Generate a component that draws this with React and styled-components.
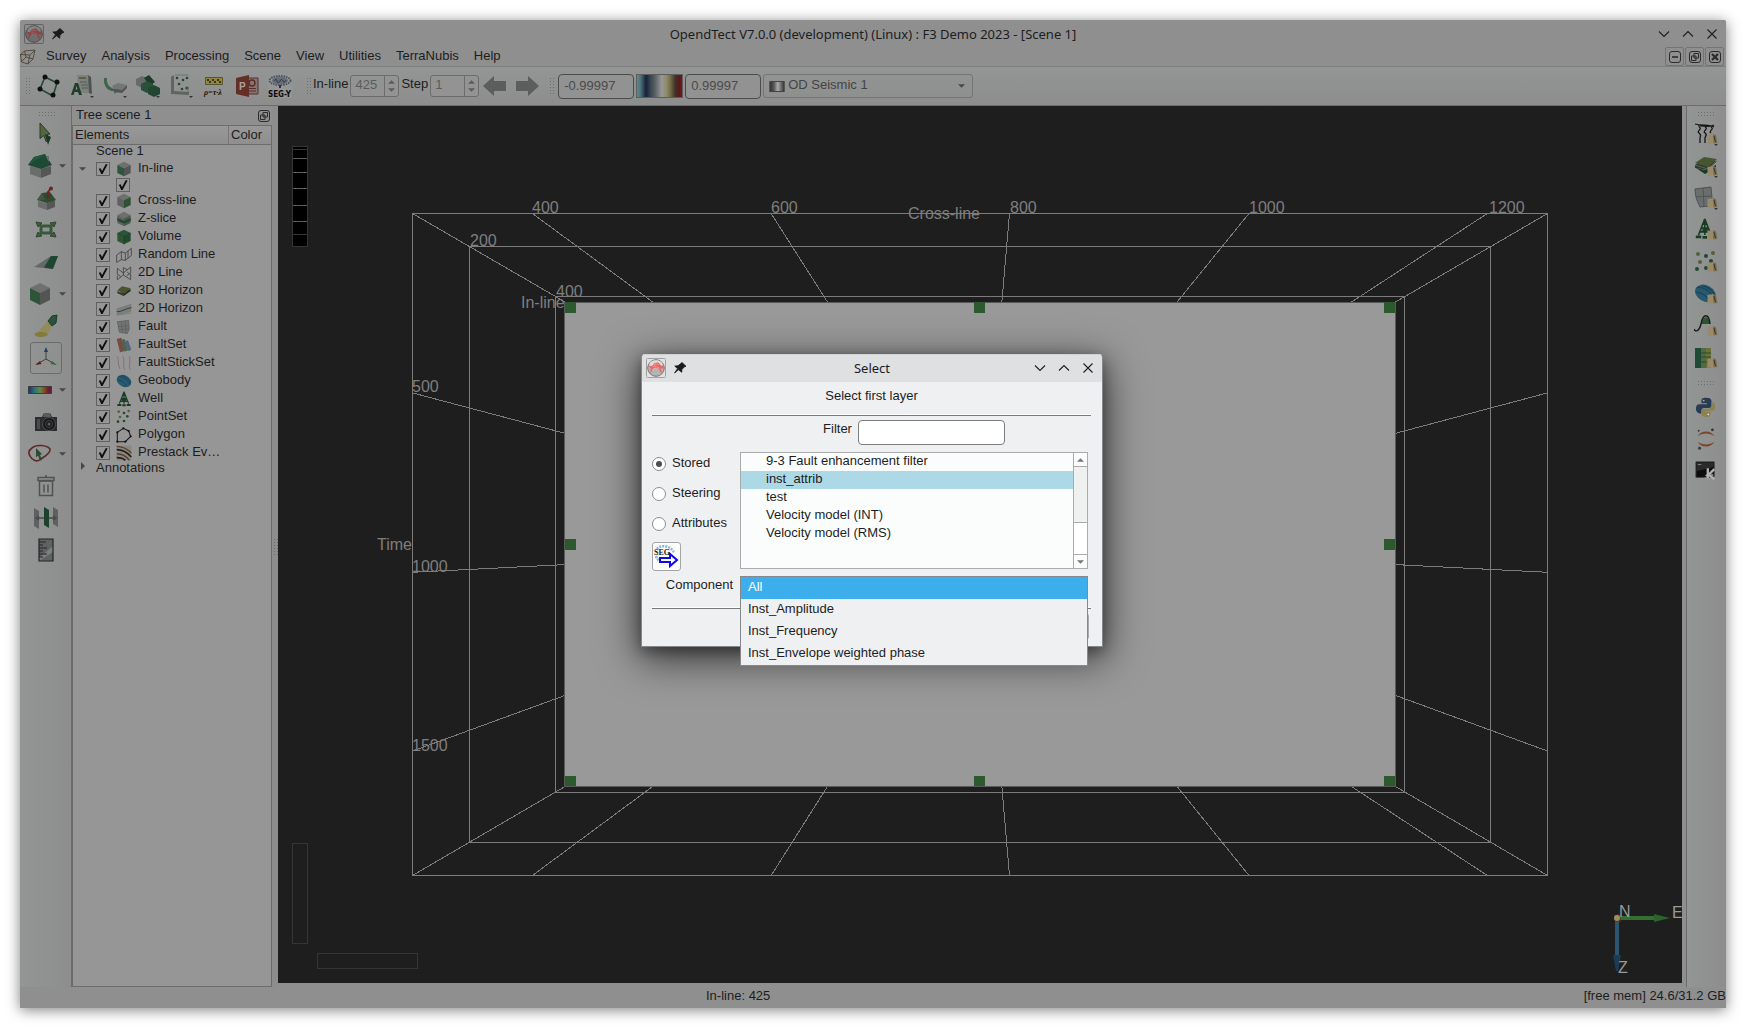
import React from "react";
import styled, { createGlobalStyle, css } from "styled-components";

const sans = `"Liberation Sans", Arial, Helvetica, sans-serif`;
const noto = `"Noto Sans", sans-serif`;

const Global = createGlobalStyle`
  *, *::before, *::after { box-sizing: border-box; }
  body { margin: 0; background: #fff; color: #1c1d1e; font: 13px/18px ${sans}; }
  button, input, select { font: inherit; color: inherit; margin: 0; }
  svg { display: block; flex: none; }
`;

/* ---------- window frame ---------- */

const Desktop = styled.div`
  display: flex;
  min-height: 100vh;
  padding: 20px;
`;

const MainWindow = styled.div`
  position: relative;
  display: flex;
  flex: 1;
  flex-direction: column;
  min-width: 0;
  background: #8f8f8f;
  border-radius: 2px 2px 0 0;
  box-shadow: 0 2px 14px rgba(0, 0, 0, 0.5);
`;

const TitleBar = styled.header`
  display: grid;
  grid-template-columns: 1fr auto 1fr;
  align-items: center;
  height: 27px;
  padding: ${(p) => (p.$dialog ? "0 4px 1px" : "0 4px")};
  font: 13px/18px ${noto};
  background: ${(p) => (p.$dialog ? "#dfe0e2" : "#8f8f8f")};
  border-radius: 3px 3px 0 0;
`;

const TitleText = styled.h1`
  margin: 0;
  font: inherit;
`;

const TitleSide = styled.div`
  display: flex;
  align-items: center;
  gap: ${(p) => (p.$end ? 4 : 6)}px;
  justify-content: ${(p) => (p.$end ? "flex-end" : "flex-start")};
`;

const PlainButton = styled.button`
  display: flex;
  align-items: center;
  justify-content: center;
  width: 20px;
  height: 20px;
  padding: 0;
  background: none;
  border: 0;
`;

const MenuBar = styled.nav`
  display: flex;
  align-items: center;
  height: 20px;
  border-bottom: 1px solid #7d7d7d;
`;

const MenuList = styled.div`
  display: flex;
  flex: 1;
  gap: 15px;
  padding-left: 10px;
`;

const MenuItem = styled.button`
  height: 18px;
  padding: 0 0 2px;
  line-height: 16px;
  background: none;
  border: 0;
`;

const MdiButtons = styled.div`
  display: flex;
  gap: 1px;
  padding-right: 2px;
`;

const MdiButton = styled(PlainButton)`
  width: 19px;
  height: 19px;
  border: 1px solid #747474;
  border-radius: 2px;
`;

/* ---------- top toolbar ---------- */

const Toolbar = styled.div`
  display: flex;
  align-items: center;
  height: 39px;
  padding-left: 5px;
  background: linear-gradient(#939695, #8d8d8d);
  border-bottom: 1px solid #6c6c6c;
`;

const Grip = styled.div`
  flex: none;
  width: ${(p) => (p.$wide ? 18 : 5)}px;
  height: ${(p) => (p.$wide ? 5 : 18)}px;
  background: radial-gradient(circle, #6c6d6d 0 0.8px, transparent 1px) 0 0 / 3px 3px;
`;

const ToolButton = styled.button`
  position: relative;
  display: flex;
  flex: none;
  align-items: center;
  justify-content: center;
  width: ${(p) => (p.$side ? 32 : 33)}px;
  height: 32px;
  padding: 0;
  background: none;
  border: 1px solid ${(p) => (p.$on ? "#6b6b6b" : "transparent")};
  border-radius: 3px;
`;

const ToolGroup = styled.div`
  display: flex;
  align-items: center;
  padding: 0 10px 0 2px;
`;

const Field = styled.label`
  display: flex;
  align-items: center;
  gap: 2px;
  padding-left: 2px;
`;

const FieldText = styled.span`
  padding-bottom: 4px;
`;

const Spin = styled.span`
  display: flex;
  width: 49px;
  height: 22px;
  color: #5b5b5b;
  background: #939393;
  border: 1px solid #6c6c6c;
  border-radius: 3px;
`;

const SpinInput = styled.input`
  width: 34px;
  padding: 0 0 2px 4px;
  background: none;
  border: 0;
  border-right: 1px solid #6c6c6c;
  outline: 0;
`;

const SpinArrows = styled.span`
  display: flex;
  flex: 1;
  flex-direction: column;
  align-items: center;
  justify-content: space-evenly;
`;

const RangeGroup = styled.div`
  display: flex;
  align-items: center;
  gap: 2px;
  padding-left: 4px;
`;

const ArrowGroup = styled.div`
  display: flex;
  padding-right: 6px;
`;

const RangeInput = styled.input`
  width: 76px;
  height: 25px;
  padding: 0 4px 2px 5px;
  color: #4a4a4a;
  background: #929292;
  border: 1px solid #4c4c4c;
  border-radius: 4px;
`;

const ColorBar = styled.div`
  width: 47px;
  height: 24px;
  border: 1px solid #5d5d5d;
  background: linear-gradient(90deg, #5e8a8c, #4b7278 8%, #16213a 20%, #3a4552 30%, #596063 40%, #989898 55%, #8d8a66 66%, #6e6846 75%, #3c3328 85%, #60161a 94%, #6e1a1a);
`;

const TableSelect = styled.span`
  display: flex;
  align-items: center;
  width: 210px;
  height: 24px;
  padding: 0 7px 0 5px;
  border: 1px solid #757575;
  border-radius: 3px;
`;

const BareSelect = styled.select`
  flex: 1;
  height: 20px;
  padding: 0 0 2px 3px;
  color: #444;
  appearance: none;
  background: none;
  border: 0;
`;

/* ---------- workspace ---------- */

const Workspace = styled.div`
  display: flex;
  flex: 1;
  min-height: 0;
`;

const SideBar = styled.aside`
  display: flex;
  flex: none;
  flex-direction: column;
  align-items: ${(p) => (p.$right ? "center" : "flex-start")};
  width: ${(p) => (p.$right ? 40 : 51)}px;
  padding: 5px ${(p) => (p.$right ? 2 : 0)}px 0 0;
  background: linear-gradient(90deg, #939695, #8d8d8d);
  border-left: ${(p) => (p.$right ? "1px solid #6c6c6c" : "0")};
`;

const GripRow = styled.div`
  display: flex;
  align-self: ${(p) => (p.$left ? "flex-start" : "center")};
  align-items: ${(p) => (p.$gap ? "center" : "flex-start")};
  height: ${(p) => (p.$gap ? 17 : 7)}px;
  margin-left: ${(p) => (p.$left ? 18 : 0)}px;
`;

const SideRow = styled.div`
  display: flex;
  align-items: center;
  padding-left: ${(p) => (p.$drop ? 4 : 10)}px;
`;

const DropButton = styled.button`
  display: flex;
  align-items: center;
  justify-content: center;
  width: 12px;
  height: 20px;
  padding: 0;
  background: none;
  border: 0;
`;

const TreeDock = styled.section`
  display: flex;
  flex: none;
  flex-direction: column;
  width: 201px;
  border-left: 1px solid #6c6c6c;
`;

const DockTitle = styled.h2`
  display: flex;
  justify-content: space-between;
  height: 19px;
  margin: 0;
  padding-left: 4px;
  font: 13px/18px ${sans};
`;

const FloatButton = styled(PlainButton)`
  width: 16px;
`;

const TreeBox = styled.div`
  flex: 1;
  background: #969696;
  border: 1px solid #6c6c6c;
`;

const TreeHead = styled.div`
  display: flex;
  height: 19px;
  background: linear-gradient(#989898, #8f8f8f);
  border-bottom: 1px solid #6c6c6c;
`;

const HeadCell = styled.div`
  flex: ${(p) => (p.$grow ? 1 : "none")};
  width: ${(p) => (p.$grow ? "auto" : "43px")};
  padding-left: 2px;
  border-left: ${(p) => (p.$grow ? "0" : "1px solid #777")};
`;

const TreeRow = styled.div`
  display: flex;
  align-items: center;
  height: ${(p) => p.$h}px;
  padding-left: ${(p) => (p.$sub ? 43 : 4)}px;
  line-height: ${(p) => (p.$h < 16 ? 12 : 16)}px;
`;

const PlainRow = styled(TreeRow)`
  align-items: flex-start;
`;

const Expander = styled.span`
  display: flex;
  justify-content: center;
  width: 11px;
  margin-right: 8px;
`;

const TreeLabel = styled.label`
  display: flex;
  align-items: center;
  gap: 6px;
`;

const TreeText = styled.span`
  padding-bottom: 2px;
`;

const Check = styled.input`
  display: grid;
  place-items: center;
  width: 14px;
  height: 14px;
  appearance: none;
  border: 1px solid #616161;

  &:checked::before {
    content: "";
    width: 10px;
    height: 10px;
    background: #101010;
    clip-path: polygon(8% 48%, 26% 42%, 40% 70%, 78% 0, 96% 6%, 46% 100%, 32% 100%);
  }
`;

const Splitter = styled.div`
  display: flex;
  flex: none;
  align-items: center;
  justify-content: center;
  width: 6px;
  background: #8d8d8d;
`;

const SceneArea = styled.main`
  flex: 1;
  min-width: 0;
  margin: 0 4px 4px 0;
  overflow: hidden;
  background: #1e1e1e;
`;

const SceneSvg = styled.svg`
  width: 100%;
  height: 100%;
  font: 16px ${sans};
  fill: #7e7e7e;
`;

const StatusBar = styled.footer`
  display: grid;
  grid-template-columns: 1fr auto;
  height: 21px;
  padding-left: 686px;
  line-height: 18px;
`;

/* ---------- dialog ---------- */

const Overlay = styled.div`
  position: absolute;
  inset: 0;
  display: flex;
  align-items: flex-start;
  justify-content: center;
  padding: 334px 2px 0 0;
`;

const Dialog = styled.div`
  width: 462px;
  background: #eff0f2;
  border: 1px solid #85878a;
  border-top-color: #d0d1d3;
  border-radius: 4px 4px 0 0;
  box-shadow: 0 10px 40px 2px rgba(0, 0, 0, 0.65), 0 4px 14px rgba(0, 0, 0, 0.35);
`;

const DialogBody = styled.div`
  padding: 0 11px 0 10px;
`;

const DialogHeading = styled.h2`
  margin: 0;
  padding: 5px 0 9px;
  font: 13px/18px ${sans};
  text-align: center;
`;

const Rule = styled.hr`
  height: 2px;
  margin: 0;
  background: #77797b;
  border: 0;
  border-top: 1px solid #fff;
`;

const FormGrid = styled.div`
  display: grid;
  grid-template-columns: 88px 1fr;
  padding-right: 3px;
`;

const FilterRow = styled.label`
  display: flex;
  grid-column: 2;
  gap: 6px;
  justify-content: center;
  height: 33px;
  padding-top: 4px;
`;

const FilterInput = styled.input`
  width: 147px;
  height: 25px;
  padding: 0 5px;
  background: #fff;
  border: 1px solid #7b7d7f;
  border-radius: 4px;
`;

const RadioGroup = styled.div`
  display: flex;
  flex-direction: column;
  align-items: flex-start;
`;

const RadioRow = styled.label`
  display: flex;
  align-items: center;
  gap: 6px;
  height: 30px;
`;

const RadioText = styled.span`
  padding-bottom: 2px;
`;

const Radio = styled.input`
  display: grid;
  place-items: center;
  width: 14px;
  height: 14px;
  appearance: none;
  background: #fff;
  border: 1px solid #8b8d8f;
  border-radius: 50%;

  &:checked::before {
    content: "";
    width: 6px;
    height: 6px;
    background: #4d4d4d;
    border-radius: 50%;
  }
`;

const SegButton = styled(PlainButton)`
  width: 29px;
  height: 29px;
  margin-top: 3px;
  background: #fcfcfc;
  border: 1px solid #a3a5a7;
  border-radius: 3px;
`;

const ListFrame = styled.div`
  display: flex;
  height: 117px;
  margin-top: 3px;
  background: #fbfdfd;
  border: 1px solid #a9abad;
`;

const listBase = css`
  display: block;
  padding: 0;
  overflow: hidden;
  border: 0;
  border-radius: 0;
  outline: 0;
  scrollbar-width: none;
`;

const StoredList = styled.select`
  ${listBase}
  flex: 1;
  background: transparent;

  option {
    height: 18px;
    min-height: 18px;
    padding: 0 0 0 25px;
    font: 13px/16px ${sans};
    color: #1c1d1e;
  }

  option:checked {
    color: #1c1d1e;
    background: #add8e6 linear-gradient(#add8e6, #add8e6);
  }
`;

const ScrollTrack = styled.div`
  display: flex;
  flex-direction: column;
  width: 14px;
  background: #fff;
  border-left: 1px solid #a9abad;
`;

const ScrollButton = styled.button`
  display: flex;
  align-items: center;
  justify-content: center;
  height: 14px;
  padding: 0;
  background: #fcfcfc;
  border: 0 solid #a9abad;
  border-width: ${(p) => (p.$down ? "1px 0 0" : "0 0 1px")};
`;

const ScrollThumb = styled.div`
  height: 56px;
  margin-bottom: auto;
  background: #eff0f0;
  border-bottom: 1px solid #a9abad;
`;

const ComponentRow = styled.div`
  position: relative;
  display: flex;
  grid-column: 1 / -1;
  height: 36px;
  padding-top: 5px;
`;

const ComponentLabel = styled.label`
  width: 81px;
  text-align: right;
`;

const ComponentPopup = styled.select`
  ${listBase}
  position: absolute;
  top: 5px;
  left: 88px;
  z-index: 2;
  width: 348px;
  height: 90px;
  background: #eff0f2;
  border: 1px solid #85898d;

  option {
    height: 22px;
    min-height: 22px;
    padding: 2px 0 0 7px;
    font: 13px/20px ${sans};
    color: #1c1d1e;
  }

  option:checked {
    color: #fff;
    background: #3daeec linear-gradient(#3daeec, #3daeec);
  }
`;

const DialogFooter = styled.div`
  display: flex;
  justify-content: flex-end;
  height: 37px;
  padding: 4px 2px 0 0;
`;

const FooterButton = styled.button`
  width: 84px;
  height: 27px;
  background: #f6f7f8;
  border: 1px solid #a9abad;
  border-radius: 3px;
`;

/* ---------- drawings ---------- */

const Ico = ({ s = 24, children, box = 24 }) => (
  <svg width={s} height={s} viewBox={`0 0 ${box} ${box}`} fill="none" aria-hidden="true">
    {children}
  </svg>
);

const Down = ({ c = "#474747" }) => (
  <svg width="7" height="4" viewBox="0 0 8 4" aria-hidden="true"><path d="M0 0h8L4 4z" fill={c} /></svg>
);
const Up = ({ c = "#474747" }) => (
  <svg width="7" height="4" viewBox="0 0 8 4" aria-hidden="true"><path d="M0 4h8L4 0z" fill={c} /></svg>
);
const RightTri = () => (
  <svg width="4" height="8" viewBox="0 0 4 8" aria-hidden="true"><path d="M0 0v8l4-4z" fill="#474747" /></svg>
);

const AppIcon = ({ dim }) => (
  <Ico s={20} box={20}>
    <rect x=".5" y=".5" width="19" height="19" rx="1" fill={dim ? "#8b8b8b" : "#e2e2e2"} stroke={dim ? "#646464" : "#a2a2a2"} />
    <circle cx="10" cy="10" r="8.3" fill={dim ? "#6e6e6e" : "#b3b5b4"} stroke={dim ? "#4c4c4c" : "#777"} />
    <ellipse cx="10" cy="6.500" rx="6.500" ry="4.200" fill={dim ? "#848484" : "#dcdddd"} />
    <path d="M2.500 8.500 7 7.500l1-2.500 4.500-.5 2 2.500 3.500 2-1 2-2.500-1 1.500 4.500h-1.500L13 10.500l-5-.3-2 1-.5 3.300H4.200l.5-4.500z" fill={dim ? "#8f4444" : "#ef6562"} />
    <path d="M8 6l5 .5M7 8.500l6 1M9 5v4" stroke={dim ? "#a06a6a" : "#f7a5a2"} strokeWidth=".6" />
  </Ico>
);

const Pin = () => (
  <Ico s={16} box={16}>
    <path d="M10 2.500 14 6.300l-1.500.5-2.500 2.500-.3 3L6.500 9.800 2.500 13l3-4.300L2.800 6l3.200-.2 2.800-2.300z" fill="#1a1b1c" stroke="#1a1b1c" strokeWidth=".8" strokeLinejoin="round" />
  </Ico>
);

const Chev = ({ kind }) => (
  <Ico s={12} box={12}>
    <path d={kind === "min" ? "M1 3.500l5 5 5-5" : kind === "max" ? "M1 8.500l5-5 5 5" : "M1.500 1.500l9 9M10.500 1.500l-9 9"} stroke="#1d1e20" strokeWidth="1.100" />
  </Ico>
);

const WindowControls = () => (
  <TitleSide $end>
    <PlainButton aria-label="Minimize"><Chev kind="min" /></PlainButton>
    <PlainButton aria-label="Maximize"><Chev kind="max" /></PlainButton>
    <PlainButton aria-label="Close"><Chev kind="close" /></PlainButton>
  </TitleSide>
);

const MdiGlyph = ({ kind }) => (
  <Ico s={12} box={12}>
    <rect x=".5" y=".5" width="11" height="11" rx="2.500" stroke="#2b2b2b" />
    {kind === "min" && <path d="M3 6h6" stroke="#2b2b2b" strokeWidth="1.600" />}
    {kind === "restore" && <path d="M5 2.500h4.500V7H5zM2.500 5h4.500v4.500H2.500z" stroke="#2b2b2b" />}
    {kind === "close" && <path d="M3 3l6 6M9 3L3 9" stroke="#2b2b2b" strokeWidth="2.200" />}
  </Ico>
);

const WireBox = () => (
  <Ico s={16} box={16}>
    <path d="M.5 5.500 4.500 2 15 1l-2 9-5 5-6.500-2zM.5 5.500 10 6l5-5M10 6 8 15M2 12l4-4 7 2M4.500 2 6 8" stroke="#4f4437" strokeWidth=".9" />
  </Ico>
);

const Folder = () => (
  <g>
    <path d="M13.500 13l6-1v9l-6 1z" fill="#978b6c" />
    <path d="M19 12l3 1 1.500 8-4 .5z" fill="#7a6e50" />
    <path d="M20 14l1.500 6" stroke="#3a3427" />
  </g>
);
const Corner = () => <path d="M20 22h4l-2 2z" fill="#333" />;

const Cube = ({ top = "#6e7070", left = "#5f6161", right = "#535555" }) => (
  <g>
    <path d="M12 1 22 6 12 11 2 6z" fill={top} />
    <path d="M2 6l10 5v12L2 18z" fill={left} />
    <path d="M22 6l-10 5v12l10-5z" fill={right} />
  </g>
);

const Tower = () => (
  <g stroke="#183c24" strokeWidth="1.700">
    <path d="M12 1 5 19M12 1l7 18M8 11h8M9.500 7h5M7 15.500h10M8 11l9 5M16 11l-9 5M12 1v18" />
    <path d="M2 21h6M9.500 21.500h5M16 21h6" strokeWidth="3" />
  </g>
);
const Dots = () => (
  <g>
    {[[4, 4], [19, 3], [6, 12]].map(([x, y]) => <circle key={x} cx={x} cy={y} r="2" fill="#56603c" />)}
    {[[12, 6], [17, 11], [3, 19], [12, 18]].map(([x, y]) => <circle key={x + y} cx={x} cy={y} r="2" fill="#1f4a31" />)}
  </g>
);
const Body = () => (
  <g>
    <ellipse cx="12" cy="12" rx="11.500" ry="8.500" transform="rotate(28 12 12)" fill="#275a70" />
    <path d="M3 6c6-2 15 4 18 11M2 11c5-1 11 3 14 9M8 4c6 0 12 5 14 10" stroke="#1a4558" strokeWidth="1.400" />
  </g>
);
const FaultPatch = () => (
  <g>
    <path d="M2 4l17-2 1 13-3 7-12-2z" fill="#727474" stroke="#5c5d5d" />
    <path d="M8 3.500l2 17M14 3l1 18M3 11l16-1M5 16l14-1" stroke="#5a5c5c" />
  </g>
);
const Slab = () => (
  <g>
    <path d="M2 14l9 6 11-6v-3L11 16z" fill="#173d2a" />
    <path d="M1 11 10 5l13 2-9 9-13-2z" fill="#2e3b2c" />
    <path d="M1 9 10 3l13 2-9 8z" fill="#465730" />
    <path d="M1 11l13 4 9-9" stroke="#7c7c7a" strokeWidth=".6" />
  </g>
);
const HorizonPatch = () => (
  <g>
    <path d="M2 15l10 4 10-7v-3L12 14z" fill="#1f2a20" />
    <path d="M2 12v3l10 5v-4z" fill="#33402a" />
    <path d="M2 11 9 5l13 3-9 8z" fill="#4a5230" />
  </g>
);

const treeArt = {
  inline: <Cube left="#2f5539" />,
  cross: <Cube right="#2c5234" />,
  zslice: <g><Cube /><path d="M2 10.500l10 4.500 10-4.500v4L12 19 2 14.500z" fill="#22492f" /></g>,
  volume: <g><Cube top="#2c5536" left="#2b5636" right="#24492e" /><path d="M2 6l10 5 10-5M12 11v12" stroke="#1b3a25" /></g>,
  random: <path d="M1 12 8 7v12l-7 4zM8 7l6 2v11l-6-1M14 9l9-7v11l-9 7M18 6v11" stroke="#3b3c3d" strokeWidth="1.200" />,
  line2d: <path d="M2 5l9 7 11-9v9l-6 4M2 5v9l5 3M2 22l9-7 11 7v-8l-5-3M2 22v-6M11 4v11M11 4l6 3" stroke="#3b3c3d" strokeWidth="1.200" />,
  hor3d: <HorizonPatch />,
  hor2d: <g><path d="M1 11 23 4v12L1 21z" fill="#7b7e7c" /><path d="M1 16c9 0 11-4 22-6" stroke="#25412f" strokeWidth="1.400" /><path d="M1 21l22-3" stroke="#6b6d6c" /></g>,
  fault: <FaultPatch />,
  faultset: <g><path d="M1 3l7-2 5 20-7 2z" fill="#754b42" /><path d="M8 4l5-1 5 17-5 2z" fill="#4a6650" /><path d="M14 6l4-1 5 14-5 2z" fill="#50657c" /></g>,
  sticks: <path d="M2 2c3 6 0 12 4 19M10 2c4 6-1 12 3 20M20 2c3 6-2 12 1 20" stroke="#83676a" strokeWidth="1.200" />,
  body: <Body />,
  well: <Tower />,
  points: <Dots />,
  polygon: <g><path d="M2 8 11 2l8 4 3 8-8 8H2z" stroke="#181818" strokeWidth="1.600" />{[[2, 8], [11, 2], [19, 6], [22, 14], [14, 22], [2, 22]].map(([x, y]) => <circle key={x + y} cx={x} cy={y} r="1.600" fill="#111" />)}</g>,
  prestack: <g><path d="M1 1h22v22H1z" fill="#898782" /><path d="M1 7c8 0 16 4 22 11M1 19c6 0 10 1 13 4" stroke="#20201e" strokeWidth="2.400" /><path d="M1 2c9 0 16 4 22 10" stroke="#5a3f20" strokeWidth="2" /><path d="M1 13c8 0 14 3 19 10" stroke="#5a3f20" strokeWidth="2.200" /></g>,
};

const House = () => (
  <g>
    <path d="M2 12l11 3v9L2 20z" fill="#6b6c6c" />
    <path d="M13 15l10-3v8l-10 4z" fill="#555656" />
    <path d="M0 11 6 3l11-3 7 11-11 4z" fill="#1c4a35" />
    <path d="M0 11 6 3l11-3-5 4z" fill="#225640" />
    <path d="M18 2h3v6l-2-3z" fill="#6a6b6b" />
  </g>
);

const WellHouse = () => (
  <g>
    <path d="M4 15l9 2v7l-9-3z" fill="#6b6c6c" />
    <path d="M13 17l8-3v7l-8 3z" fill="#555656" />
    <path d="M3 14 8 7l8-1 6 8-9 3z" fill="#314a33" />
    <path d="M3 14 8 7l3 7z" fill="#3d5a40" />
    <path d="M14 11V6l3-4" stroke="#6e2420" strokeWidth="2" />
    <circle cx="17" cy="2.500" r="2" fill="#6e2420" />
    <path d="M11 9l3 4 3-4z" fill="#5e2a22" />
  </g>
);

const leftTools = [
  { name: "Select", art: <g><path d="M6 1l10 11-3 .5 2 6-3 1-2-6-4 3z" fill="#53663f" stroke="#2b3a26" /><path d="M11 12l6 3-3 8z" fill="#17392a" /></g> },
  { name: "Survey box", drop: true, art: <House /> },
  { name: "Wells", art: <WellHouse /> },
  { name: "View all", art: <g><path d="M7 8h10v7H7z" stroke="#36583b" strokeWidth="3" /><path d="M2 4l6 1-4 4zM22 4l-6 1 4 4zM2 19l6-1-4-4zM22 19l-6-1 4-4z" fill="#465a3c" stroke="#2f4731" /></g> },
  { name: "View plane", art: <g><path d="M0 17 17 6h7l-6 13z" fill="#656868" /><path d="M17 6h7l-5 13-9-1.500z" fill="#1f4630" /></g> },
  { name: "View inline", drop: true, art: <Cube left="#2f5539" /> },
  { name: "Headlight", art: <g><path d="M14 7l4 5-5 10-12-1z" fill="#928b58" /><ellipse cx="7" cy="20.500" rx="6.500" ry="2.500" fill="#857b38" /><path d="M14 7l4-5 5-1-1 8-4 3z" fill="#2b523b" stroke="#1c3c29" /></g> },
  { name: "Axes", on: true, art: <g><path d="M12 13V3M12 13l-9 5M12 13l9 5" stroke="#404040" /><path d="M12 1l2 5h-4z" fill="#223d63" /><path d="M1 19l5-4 1.500 3z" fill="#5b2020" /><path d="M23 19l-5-4-1.500 3z" fill="#336a3c" /></g> },
  { name: "Color table", drop: true, art: <g><defs><linearGradient id="rb"><stop offset="0" stopColor="#24286e" /><stop offset=".25" stopColor="#27707a" /><stop offset=".5" stopColor="#5f8a45" /><stop offset=".7" stopColor="#82482a" /><stop offset=".85" stopColor="#702020" /><stop offset="1" stopColor="#551c55" /></linearGradient></defs><path d="M.5 8.500h23v7H.5z" fill="url(#rb)" stroke="#3d3d3d" /></g> },
  { name: "Snapshot", art: <g><path d="M1 7h7l2-4h6l2 4h5v14H1z" fill="#2c2d2e" /><path d="M10 3h6l1 4H9z" fill="#5a5c5c" /><path d="M3 9h3v10H3z" fill="#4a4c4d" /><circle cx="15" cy="14" r="6.500" fill="#1a1a1a" stroke="#4e4f50" /><circle cx="15" cy="14" r="3.500" stroke="#3f4244" /><circle cx="15" cy="14" r="1.500" fill="#5a5f62" /></g> },
  { name: "Polygon select", drop: true, art: <g><path d="M4 6c4-4 15-3 18 1 1 4-5 7-9 10-4 4-9 1-11-3-2-3-1-6 2-8z" stroke="#5f292b" strokeWidth="1.600" /><path d="M8 6l6 6-2 1 2 5-2 .5-2-5-2 2z" fill="#2c4a30" /></g> },
  { name: "Delete", art: <g stroke="#505151" strokeWidth="1.500"><path d="M5.500 7h13v14.500h-13zM10 10.500v8M14 10.500v8M12 1v2" /><path d="M4 3.500h16v3H4z" /></g> },
  { name: "Display sections", art: <g><path d="M0 2l5 3v18l-5-3zM19 1l5 3v17l-5-3z" fill="#5f6161" /><path d="M2 12h20M19 10l3 2-3 2M5 10l-3 2 3 2" stroke="#47494a" strokeWidth="1.400" /><path d="M10 1l5 3v18l-5-3z" fill="#1d422b" /></g> },
  { name: "Measure", art: <g><path d="M5 1h14v22H5z" fill="#5f6262" /><path d="M5 20 19 8v6L5 23z" fill="#7d8080" /><path d="M5 1h14v22H5z" stroke="#242526" strokeWidth="1.200" /><path d="M5 4h7M5 7h4M5 10h8M5 13h4M5 16h8M5 19h4" stroke="#242526" strokeWidth="1.200" /></g> },
];

const topTools = [
  { name: "Survey setup", art: <g><path d="M8 3l12 6-4 13L3 15z" stroke="#234a34" strokeWidth="1.600" />{[[8, 3], [20, 8], [16, 21], [3, 15]].map(([x, y]) => <circle key={x} cx={x} cy={y} r="2.500" fill="#101010" />)}</g> },
  { name: "Attributes", art: <g><path d="M7 1h11l3 18H9z" fill="#7d807e" /><path d="M18 1l3 2 1 17-3-1z" fill="#4f5150" /><path d="M9 3h7v2H9z" fill="#59613f" /><path d="M10 8h7M11 11h7M12 14h6" stroke="#53604f" /><path d="M1 21 5 9h3l4 12H9l-1-3H4.500l-1 3zM5.500 15.500h2L6.500 12z" fill="#1e3f29" fillRule="evenodd" /><Corner /></g> },
  { name: "Volume builder", art: <g><path d="M1 4c-1 9 5 14 11 13l-1 3 6-4-5-3v2C7 14 3 10 4 4z" fill="#3f6449" /><path d="M9 12l6-3 9 2-5 5-8-1z" fill="#737674" /><path d="M11 15l8 1 5-5v3l-5 5-8-1z" fill="#515453" /><Corner /></g> },
  { name: "Volume set", art: <g><path d="M0 5l6-3 5 2v7l-5 3-6-3z" fill="#686a6a" /><path d="M8 4l5-3 6 7-5 4z" fill="#1b3c28" /><path d="M5 10l6-3 6 3v6l-6 3-6-3z" fill="#2a5039" /><path d="M12 14l6-3 6 3v6l-6 3-6-3z" fill="#224632" /><Corner /></g> },
  { name: "Cross-plot", art: <g><path d="M2 3l3-2v16l15 1v3L2 20z" fill="#626464" /><g fill="#25472f"><circle cx="8" cy="4" r="1.300" /><circle cx="14" cy="6" r="1.300" /><circle cx="18" cy="4" r="1.300" /><circle cx="10" cy="10" r="1.300" /><circle cx="18" cy="14" r="1.600" /><circle cx="13" cy="15" r="1.300" /></g><path d="M6 1h13M19 18v-5" stroke="#717272" /><Corner /></g> },
  { name: "Rock physics", art: <g><path d="M3.500 3.500h17v7h-17z" fill="#8f8640" stroke="#59542c" /><path d="M5 6h2M10 6h2M15 6h2M7 8h2M12 8h2M17 8h2" stroke="#1e1d12" strokeWidth="1.400" /><text x="2" y="21" fontFamily="Liberation Serif, serif" fontStyle="italic" fontWeight="bold" fontSize="8" fill="#161616">ρ=τ·λ</text></g> },
  { name: "PowerPoint", art: <g><path d="M13 4h10v16H13z" fill="#857572" stroke="#5b2d27" /><circle cx="17" cy="9" r="3" stroke="#5b2d27" strokeWidth="1.500" /><path d="M14 14.500h7M14 17h7" stroke="#5b2d27" /><path d="M1 4l13-3v22L1 20z" fill="#642f28" /><text x="4" y="16" fontFamily="Liberation Sans, sans-serif" fontWeight="bold" fontSize="10" fill="#a9a2a1">P</text></g> },
];

const SegY = () => (
  <Ico>
    <path d="M0 0h24v24H0z" fill="#959595" />
    <ellipse cx="12" cy="6.500" rx="10.500" ry="4.500" stroke="#4a505c" strokeWidth="2" strokeDasharray="1.500 1" />
    <ellipse cx="12" cy="6.500" rx="8" ry="4" fill="#666c78" />
    <path d="M6 7c1-2 3-2 3 0s2 2 3 0 2-2 3 0 2 1 3-1" stroke="#2c3341" />
    <path d="M12 11v3" stroke="#2c3341" strokeWidth="2" />
    <text x="0" y="23" fontFamily="DejaVu Sans Condensed, DejaVu Sans, sans-serif" fontWeight="bold" fontSize="8" fill="#0c0c0c">SEG-Y</text>
  </Ico>
);

const rightTools = [
  { name: "Seismics", art: <g><path d="M1 2c7 2 15 0 19 3M4 4c6-1 10 2 16-1" stroke="#151515" strokeWidth="1.200" /><path d="M5 5c4 2-3 4 0 6s1 3 1 5v5M11 5c4 2-3 4 0 6s0 3 0 5v5M17 5c4 2-3 4 0 6" stroke="#151515" strokeWidth="1.300" /><Folder /><Corner /></g> },
  { name: "Horizons", art: <g><Slab /><Folder /><Corner /></g> },
  { name: "Faults", art: <g><path d="M1 3l16-2 1 11-3 8-9 1C3 15 1 10 1 3z" fill="#6a6e6e" stroke="#4f5252" /><path d="M9 2l1 18M2 11l15-1" stroke="#505353" /><Folder /><Corner /></g> },
  { name: "Wells manager", art: <g><g transform="scale(.9)"><Tower /></g><Folder /></g> },
  { name: "PointSets", art: <g><Dots /><Folder /></g> },
  { name: "Bodies", art: <g><g transform="scale(.95)"><Body /></g><Folder /></g> },
  { name: "Wavelets", art: <g><path d="M7 10c2-9 8-9 9 0z" fill="#2c5630" /><path d="M0 15c1 3 5 3 7-5 2-11 8-11 9 0" stroke="#191919" strokeWidth="1.400" /><Folder /></g> },
  { name: "Stratigraphy", art: <g><path d="M1 2h6v20H1z" fill="#1f4a35" /><path d="M7 2h10v20H7z" fill="#516a40" /><path d="M12 2h5v20h-5z" fill="#6d7038" /><path d="M7 7h10M7 11h10M7 16h6" stroke="#31492c" /><Folder /></g> },
];

const devTools = [
  { name: "Python", art: <g><path d="M12 2c-4 0-5 1-5 4v2h6v1H5c-3 0-4 2-4 5s2 5 4 5h2v-3c0-2 1-3 3-3h5c2 0 3-1 3-3V6c0-3-2-4-6-4z" fill="#2a3c54" /><path d="M12 23c4 0 5-1 5-4v-2h-6v-1h8c3 0 3-2 3-5s-1-4-3-4h-1v3c0 2-1 4-3 4h-4c-3 0-4 1-4 3v3c0 2 2 3 5 3z" fill="#8c8153" /><circle cx="9.500" cy="5" r="1" fill="#aaa" /><circle cx="14.500" cy="20" r="1" fill="#ddd" /></g> },
  { name: "Jupyter", art: <g><path d="M3 9c3-7 15-7 18 0-5-4-13-4-18 0zM3 15c3 7 15 7 18 0-5 4-13 4-18 0z" fill="#7b4428" /><circle cx="19" cy="2" r="1.500" fill="#333" /><circle cx="4" cy="3" r="1" fill="#333" /><circle cx="5" cy="22" r="1.800" fill="#444" /></g> },
  { name: "Terminal", art: <g><path d="M1 2h20v17H1z" fill="#0b0b0b" stroke="#444" /><path d="M2 3h18v5L2 12z" fill="#2a2a2a" /><path d="M3 5h4" stroke="#888" /><circle cx="16" cy="20" r="4.500" stroke="#8f8f8f" strokeWidth="2.500" strokeDasharray="2 1.200" /><path d="M14 9v11M21 10l-6 6 6 5" stroke="#b0b0b0" strokeWidth="2.600" /></g> },
];

/* ---------- scene ---------- */

const outer = { x1: 412.5, y1: 213.5, x2: 1547.5, y2: 875.5 };
const face = { x1: 565, y1: 302, x2: 1395.5, y2: 786.5 };
const rings = [outer, { x1: 469.5, y1: 246.5, x2: 1490.5, y2: 842.5 }, { x1: 555.5, y1: 296.5, x2: 1404.5, y2: 792.5 }];
const along = (r, axis, t) => r[axis + 1] + (r[axis + 2] - r[axis + 1]) * t;
const colTicks = [0, 0.1056, 0.316, 0.526, 0.737, 0.947, 1];
const rowTicks = [0.271, 0.542, 0.812];
const sceneLabels = [
  [532, 213, "400"], [771, 213, "600"], [1010, 213, "800"], [1249, 213, "1000"], [1489, 213, "1200"],
  [908, 219, "Cross-line"], [470, 246, "200"], [556, 297, "400"], [521, 308, "In-line"],
  [412, 392, "500"], [377, 550, "Time"], [412, 572, "1000"], [412, 751, "1500"],
];
const handles = [[565, 302], [974, 302], [1384, 302], [565, 539], [1384, 539], [565, 776], [974, 776], [1384, 776]];

const Scene = () => (
  <SceneSvg viewBox="278 106 1404 877" role="img" aria-label="Scene 1">
    <g fill="none" stroke="#7c7c7c" shapeRendering="crispEdges">
      {rings.map((r) => <rect key={r.x1} x={r.x1} y={r.y1} width={r.x2 - r.x1} height={r.y2 - r.y1} />)}
      {colTicks.map((t) => (
        <path key={t} d={`M${along(outer, "x", t)} ${outer.y1}L${along(face, "x", t)} ${face.y1}M${along(outer, "x", t)} ${outer.y2}L${along(face, "x", t)} ${face.y2}`} />
      ))}
      {rowTicks.map((t) => (
        <path key={t} d={`M${outer.x1} ${along(outer, "y", t)}L${face.x1} ${along(face, "y", t)}M${outer.x2} ${along(outer, "y", t)}L${face.x2} ${along(face, "y", t)}`} />
      ))}
    </g>
    {sceneLabels.map(([x, y, s]) => <text key={x + "-" + y} x={x} y={y}>{s}</text>)}
    <rect x="564.500" y="302.500" width="831" height="484" fill="#999" stroke="#5a5a5a" shapeRendering="crispEdges" />
    {handles.map(([x, y]) => <rect key={x + "-" + y} x={x} y={y} width="11" height={y === 776 ? 10 : 11} fill="#2d592f" />)}
    <g fill="none" stroke="#353535" shapeRendering="crispEdges">
      <rect x="292.500" y="146.500" width="15" height="100" fill="#000" />
      <path d="M293 149.500h14M293 234.500h14" />
      <path d="M293 158.500h14M293 172.500h14M293 188.500h14M293 205.500h14M293 221.500h14" stroke="#5e5e5e" />
      <rect x="292.500" y="843.500" width="15" height="100" />
      <rect x="317.500" y="953.500" width="100" height="15" />
    </g>
    <path d="M1617 918h40" stroke="#33702f" strokeWidth="4" />
    <path d="M1654 914l16 4-16 4z" fill="#2d6230" />
    <path d="M1617 918v38" stroke="#2c566c" strokeWidth="4" />
    <path d="M1613 955h8l-3 16h-2z" fill="#1d3b55" />
    <path d="M1614 915l6-1 1 8-6-1z" fill="#6b1f1f" />
    <circle cx="1617" cy="918" r="3" fill="#99935a" />
    <g fill="#999"><text x="1619" y="917">N</text><text x="1672" y="918">E</text><text x="1618" y="973">Z</text></g>
  </SceneSvg>
);

/* ---------- tree ---------- */

const treeItems = [
  ["Cross-line", "cross"], ["Z-slice", "zslice"], ["Volume", "volume"], ["Random Line", "random"], ["2D Line", "line2d"],
  ["3D Horizon", "hor3d"], ["2D Horizon", "hor2d"], ["Fault", "fault"], ["FaultSet", "faultset"], ["FaultStickSet", "sticks"],
  ["Geobody", "body"], ["Well", "well"], ["PointSet", "points"], ["Polygon", "polygon"], ["Prestack Ev…", "prestack"],
];

const TreeItem = ({ label, art, open }) => (
  <TreeRow $h={18}>
    <Expander>{open && <Down />}</Expander>
    <TreeLabel>
      <Check type="checkbox" defaultChecked />
      <Ico s={16}>{treeArt[art]}</Ico>
      <TreeText>{label}</TreeText>
    </TreeLabel>
  </TreeRow>
);

const Spinner = ({ label, value }) => (
  <Field>
    <FieldText>{label}</FieldText>
    <Spin>
      <SpinInput defaultValue={value} />
      <SpinArrows><Up c="#5b5b5b" /><Down c="#5b5b5b" /></SpinArrows>
    </Spin>
  </Field>
);

const SelectDialog = () => (
  <Overlay>
    <Dialog role="dialog" aria-label="Select">
      <TitleBar $dialog>
        <TitleSide>
          <AppIcon />
          <Pin />
        </TitleSide>
        <TitleText>Select</TitleText>
        <WindowControls />
      </TitleBar>
      <DialogBody>
        <DialogHeading>Select first layer</DialogHeading>
        <Rule />
        <FormGrid>
          <FilterRow>
            Filter
            <FilterInput type="text" />
          </FilterRow>
          <RadioGroup>
            {["Stored", "Steering", "Attributes"].map((name, i) => (
              <RadioRow key={name}>
                <Radio type="radio" name="source" defaultChecked={i === 0} />
                <RadioText>{name}</RadioText>
              </RadioRow>
            ))}
            <SegButton aria-label="SEG">
              <Ico s={25} box={25}>
                <path d="M3 5c2-3 8-4 13-1 2 1 3 3 4 4M2 12c1 3 2 4 4 5" stroke="#8ab6cf" strokeWidth="2.500" strokeDasharray="2 1" />
                <text x="0" y="11" fontFamily="Liberation Serif, serif" fontWeight="bold" fontSize="8" fill="#222">SEG</text>
                <path d="M6 14h10v-4l7 6-7 6v-4H6z" stroke="#0a0aec" strokeWidth="2" fill="#fff" />
              </Ico>
            </SegButton>
          </RadioGroup>
          <ListFrame>
            <StoredList size={6} defaultValue="inst_attrib" aria-label="Stored">
              {["9-3 Fault enhancement filter", "inst_attrib", "test", "Velocity model (INT)", "Velocity model (RMS)"].map((o) => (
                <option key={o} value={o}>{o}</option>
              ))}
            </StoredList>
            <ScrollTrack>
              <ScrollButton aria-label="Scroll up"><Up c="#777" /></ScrollButton>
              <ScrollThumb />
              <ScrollButton $down aria-label="Scroll down"><Down c="#777" /></ScrollButton>
            </ScrollTrack>
          </ListFrame>
          <ComponentRow>
            <ComponentLabel htmlFor="component">Component</ComponentLabel>
            <ComponentPopup id="component" size={4} defaultValue="All">
              {["All", "Inst_Amplitude", "Inst_Frequency", "Inst_Envelope weighted phase"].map((o) => (
                <option key={o} value={o}>{o}</option>
              ))}
            </ComponentPopup>
          </ComponentRow>
        </FormGrid>
        <Rule />
        <DialogFooter><FooterButton aria-label="Cancel" /></DialogFooter>
      </DialogBody>
    </Dialog>
  </Overlay>
);

export default function App() {
  return (
    <>
      <Global />
      <Desktop>
        <MainWindow>
          <TitleBar>
            <TitleSide><AppIcon dim /><Pin /></TitleSide>
            <TitleText>OpendTect V7.0.0 (development) (Linux) : F3 Demo 2023 - [Scene 1]</TitleText>
            <WindowControls />
          </TitleBar>
          <MenuBar>
            <WireBox />
            <MenuList>
              {["Survey", "Analysis", "Processing", "Scene", "View", "Utilities", "TerraNubis", "Help"].map((m) => (
                <MenuItem key={m}>{m}</MenuItem>
              ))}
            </MenuList>
            <MdiButtons>
              {["min", "restore", "close"].map((k) => (
                <MdiButton key={k} aria-label={k}><MdiGlyph kind={k} /></MdiButton>
              ))}
            </MdiButtons>
          </MenuBar>
          <Toolbar>
            <Grip />
            <ToolGroup>
              {topTools.map((t) => (
                <ToolButton key={t.name} aria-label={t.name}><Ico>{t.art}</Ico></ToolButton>
              ))}
              <ToolButton aria-label="SEG-Y"><SegY /></ToolButton>
            </ToolGroup>
            <Grip />
            <Spinner label="In-line" value="425" />
            <Spinner label="Step" value="1" />
            <ArrowGroup>
              <ToolButton $side aria-label="Previous">
                <Ico><path d="M0 12 11 2v5h12v10H11v5z" fill="#5c5d5d" /></Ico>
              </ToolButton>
              <ToolButton $side aria-label="Next">
                <Ico><path d="M24 12 13 2v5H1v10h12v5z" fill="#5c5d5d" /></Ico>
              </ToolButton>
            </ArrowGroup>
            <Grip />
            <RangeGroup>
              <RangeInput aria-label="Minimum" defaultValue="-0.99997" />
              <ColorBar />
              <RangeInput aria-label="Maximum" defaultValue="0.99997" />
              <TableSelect>
                <svg width="16" height="11" viewBox="0 0 14 10" aria-hidden="true">
                  <defs><linearGradient id="gs"><stop offset="0" stopColor="#2d2d2d" /><stop offset=".3" stopColor="#5a5a5a" /><stop offset=".55" stopColor="#aaa" /><stop offset=".75" stopColor="#777" /><stop offset="1" stopColor="#333" /></linearGradient></defs>
                  <path d="M.5.5h13v9H.5z" fill="url(#gs)" stroke="#444" />
                </svg>
                <BareSelect aria-label="Color table"><option>OD Seismic 1</option></BareSelect>
                <Down />
              </TableSelect>
            </RangeGroup>
          </Toolbar>
          <Workspace>
            <SideBar>
              <GripRow $left><Grip $wide /></GripRow>
              {leftTools.map((t) => (
                <SideRow key={t.name} $drop={t.drop}>
                  <ToolButton $side $on={t.on} aria-label={t.name}><Ico>{t.art}</Ico></ToolButton>
                  {t.drop && <DropButton aria-label={t.name + " menu"}><Down /></DropButton>}
                </SideRow>
              ))}
            </SideBar>
            <TreeDock>
              <DockTitle>Tree scene 1<FloatButton aria-label="Float"><MdiGlyph kind="restore" /></FloatButton></DockTitle>
              <TreeBox>
                <TreeHead><HeadCell $grow>Elements</HeadCell><HeadCell>Color</HeadCell></TreeHead>
                <PlainRow $h={15}><Expander />Scene 1</PlainRow>
                <TreeItem label="In-line" art="inline" open />
                <TreeRow $h={14} $sub><Check type="checkbox" defaultChecked aria-label="In-line 425" /></TreeRow>
                {treeItems.map(([label, art]) => <TreeItem key={label} label={label} art={art} />)}
                <PlainRow $h={15}><Expander><RightTri /></Expander>Annotations</PlainRow>
              </TreeBox>
            </TreeDock>
            <Splitter><Grip /></Splitter>
            <SceneArea><Scene /></SceneArea>
            <SideBar $right>
              <GripRow><Grip $wide /></GripRow>
              {rightTools.map((t) => <ToolButton key={t.name} $side aria-label={t.name}><Ico>{t.art}</Ico></ToolButton>)}
              <GripRow $gap><Grip $wide /></GripRow>
              {devTools.map((t) => <ToolButton key={t.name} $side aria-label={t.name}><Ico s={22}>{t.art}</Ico></ToolButton>)}
            </SideBar>
          </Workspace>
          <StatusBar><span>In-line: 425</span><span>[free mem] 24.6/31.2 GB</span></StatusBar>
          <SelectDialog />
        </MainWindow>
      </Desktop>
    </>
  );
}
